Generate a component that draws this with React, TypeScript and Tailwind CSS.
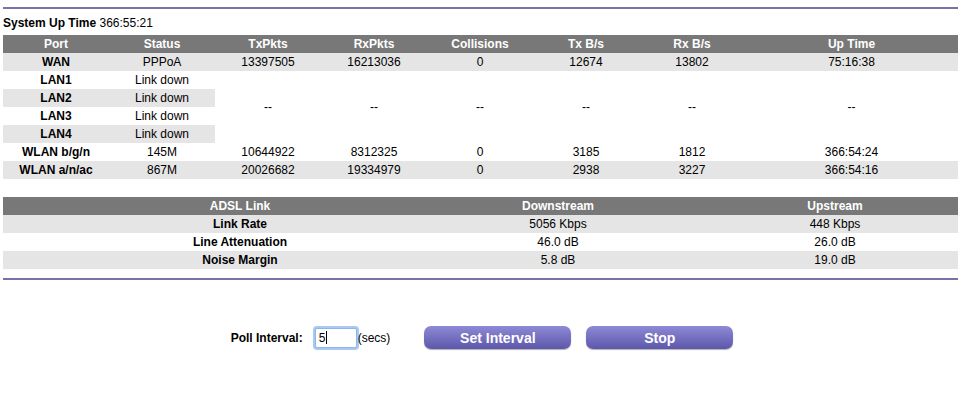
import React from 'react';

const ports = [
  { port: 'WAN', status: 'PPPoA', tx: '13397505', rx: '16213036', col: '0', txb: '12674', rxb: '13802', up: '75:16:38' },
];

const wlan = [
  { port: 'WLAN b/g/n', status: '145M', tx: '10644922', rx: '8312325', col: '0', txb: '3185', rxb: '1812', up: '366:54:24' },
  { port: 'WLAN a/n/ac', status: '867M', tx: '20026682', rx: '19334979', col: '0', txb: '2938', rxb: '3227', up: '366:54:16' },
];

const adsl = [
  { name: 'Link Rate', down: '5056 Kbps', up: '448 Kbps' },
  { name: 'Line Attenuation', down: '46.0 dB', up: '26.0 dB' },
  { name: 'Noise Margin', down: '5.8 dB', up: '19.0 dB' },
];

const gray = 'bg-[#e5e5e5]';

const Rule = () => <div className="h-[2px] bg-[#7a72a6]" />;

const StatRow = ({ r, shaded }: { r: typeof ports[0]; shaded: boolean }) => (
  <tr className={`h-[18px] ${shaded ? gray : ''}`}>
    <td className="font-bold">{r.port}</td>
    <td>{r.status}</td>
    <td>{r.tx}</td>
    <td>{r.rx}</td>
    <td>{r.col}</td>
    <td>{r.txb}</td>
    <td>{r.rxb}</td>
    <td>{r.up}</td>
  </tr>
);

export default function App() {
  const lans = ['LAN1', 'LAN2', 'LAN3', 'LAN4'];
  return (
    <div className="w-[961px] h-[400px] bg-white px-[3px] pt-[7px] text-[12px] leading-[16px] text-black font-['Liberation_Sans',Arial,sans-serif]">
      <Rule />
      <div className="mt-[6px]">
        <span className="font-bold">System Up Time</span> 366:55:21
      </div>

      <table className="mt-[4px] w-[955px] table-fixed text-center">
        <colgroup>
          <col className="w-[106px]" />
          <col className="w-[106px]" />
          <col className="w-[106px]" />
          <col className="w-[106px]" />
          <col className="w-[106px]" />
          <col className="w-[106px]" />
          <col className="w-[106px]" />
          <col />
        </colgroup>
        <thead>
          <tr className="h-[18px] bg-[#787878] text-white font-bold">
            <th>Port</th>
            <th>Status</th>
            <th>TxPkts</th>
            <th>RxPkts</th>
            <th>Collisions</th>
            <th>Tx B/s</th>
            <th>Rx B/s</th>
            <th>Up Time</th>
          </tr>
        </thead>
        <tbody>
          {ports.map(r => <StatRow key={r.port} r={r} shaded />)}
          {lans.map((l, i) => (
            <tr key={l} className="h-[18px]">
              <td className={`font-bold ${i % 2 ? gray : ''}`}>{l}</td>
              <td className={i % 2 ? gray : ''}>Link down</td>
              {i === 0 &&
                Array.from({ length: 6 }).map((_, k) => (
                  <td key={k} rowSpan={4}>--</td>
                ))}
            </tr>
          ))}
          {wlan.map((r, i) => <StatRow key={r.port} r={r} shaded={i === 1} />)}
        </tbody>
      </table>

      <table className="mt-[18px] w-[955px] table-fixed text-center">
        <colgroup>
          <col className="w-[474px]" />
          <col className="w-[162px]" />
          <col />
        </colgroup>
        <thead>
          <tr className="h-[18px] bg-[#787878] text-white font-bold">
            <th>ADSL Link</th>
            <th>Downstream</th>
            <th className="pl-[73px]">Upstream</th>
          </tr>
        </thead>
        <tbody>
          {adsl.map((r, i) => (
            <tr key={r.name} className={`h-[18px] ${i % 2 === 0 ? gray : ''}`}>
              <td className="font-bold">{r.name}</td>
              <td>{r.down}</td>
              <td className="pl-[73px]">{r.up}</td>
            </tr>
          ))}
        </tbody>
      </table>

      <div className="mt-[9px]">
        <Rule />
      </div>

      <div className="mt-[46px] flex items-center justify-center pl-[3px]">
        <span className="font-bold">Poll Interval:</span>
        <div className="ml-[12px] flex h-[20px] w-[42px] items-center rounded-[2px] border border-[#8fb4ea] bg-white pl-[3px] shadow-[0_0_0_2px_#a9c8f2]">
          <span>5</span>
          <span className="ml-[1px] h-[13px] w-px bg-black" />
        </div>
        <span className="ml-[1px]">(secs)</span>
        <button className="ml-[34px] h-[23px] w-[147px] rounded-[7px] bg-gradient-to-b from-[#8e8ad6] to-[#5d57aa] text-[14px] font-bold text-white shadow-[0_1px_1px_rgba(0,0,0,0.3)]">
          Set Interval
        </button>
        <button className="ml-[15px] h-[23px] w-[147px] rounded-[7px] bg-gradient-to-b from-[#8e8ad6] to-[#5d57aa] text-[14px] font-bold text-white shadow-[0_1px_1px_rgba(0,0,0,0.3)]">
          Stop
        </button>
      </div>
    </div>
  );
}
